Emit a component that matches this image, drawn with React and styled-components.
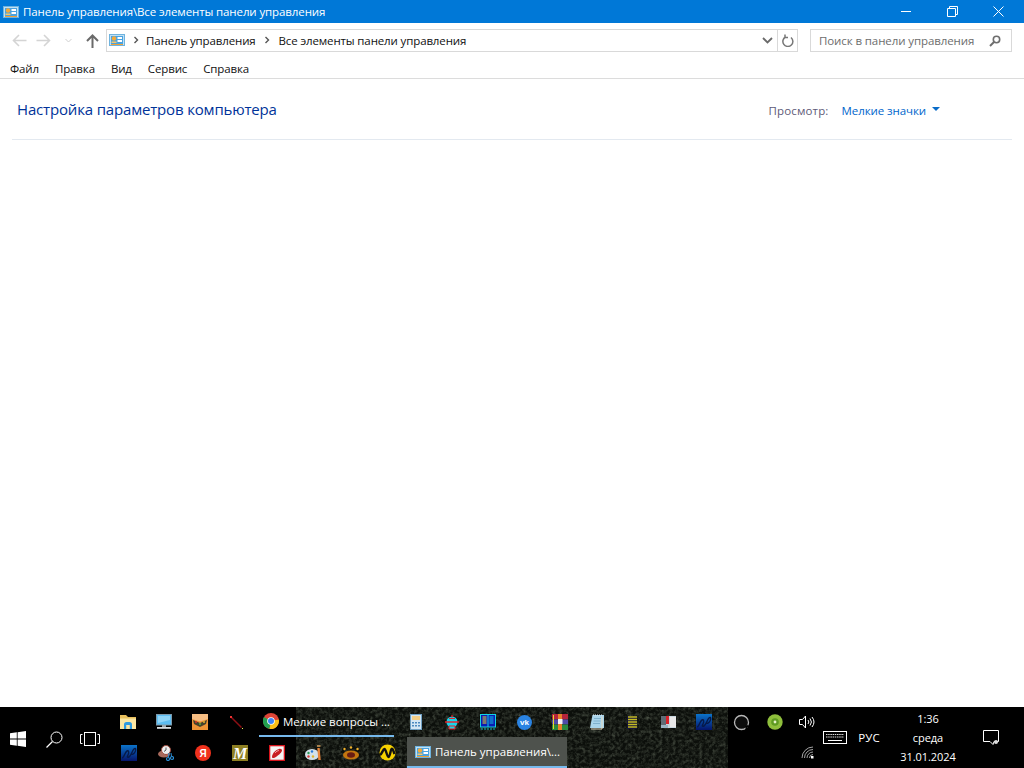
import React from "react";
import styled, { createGlobalStyle } from "styled-components";

const Global = createGlobalStyle`
  html, body { margin: 0; padding: 0; background: #fff; }
  * { box-sizing: border-box; }
  body { font-family: "Open Sans", "Noto Sans", "Liberation Sans", sans-serif; }
`;
const Page = styled.div`
  width: 1024px; height: 768px; display: flex; flex-direction: column; overflow: hidden; background: #fff;
`;
const TitleBar = styled.div`
  height: 23px; background: #0078d7; display: flex; align-items: center; color: #fff; font-size: 11.5px; padding-left: 3px; flex: none;
`;
const TitleText = styled.span`
  margin-left: 4px; flex: 1; letter-spacing: -0.11px; white-space: nowrap;
`;
const WinButton = styled.div`
  width: 46px; height: 23px; display: flex; align-items: center; justify-content: center;
`;
const WinButtons = styled.div`
  display: flex; margin-right: 3px;
`;
const NavRow = styled.div`
  height: 34px; padding: 6px 12px 5px 10px; display: flex; align-items: stretch; flex: none;
`;
const NavButtons = styled.div`
  width: 96px; display: flex; align-items: center; flex: none;
`;
const NavSlot = styled.div`
  width: ${p => p.$w}px; display: flex; justify-content: center; align-items: center;
`;
const AddressBox = styled.div`
  width: 692px; border: 1px solid #d9d9d9; display: flex; align-items: center; font-size: 11.5px; color: #111; flex: none;
`;
const Crumbs = styled.div`
  flex: 1; display: flex; align-items: center; padding: 0 0 1px 2px;
`;
const Crumb = styled.span`
  white-space: nowrap; letter-spacing: -0.13px;
`;
const CrumbSep = styled.span`
  display: flex; width: ${p => p.$w}px; justify-content: center;
`;
const AddrTail = styled.div`
  width: 20px; display: flex; justify-content: center;
`;
const Refresh = styled.div`
  width: 20px; height: 100%; border-left: 1px solid #d9d9d9; display: flex; align-items: center; justify-content: center;
`;
const SearchBox = styled.div`
  width: 202px; margin-left: 12px; border: 1px solid #d9d9d9; display: flex; align-items: center; justify-content: space-between;
  padding: 0 10px 0 8px; font-size: 11.5px; color: #6d6d6d; letter-spacing: -0.1px; white-space: nowrap; flex: none;
`;
const MenuBar = styled.div`
  height: 22px; border-bottom: 1px solid #dcdcdc; display: flex; padding: 3px 0 0 10px; gap: 16px; font-size: 11.5px; color: #111; flex: none;
`;
const MenuItem = styled.span`
  line-height: 18px; letter-spacing: -0.13px;
`;
const Content = styled.main`
  flex: 1; padding: 0 12px;
`;
const Header = styled.div`
  height: 61px; border-bottom: 1px solid #e3e9f0; display: flex; align-items: center; justify-content: space-between; padding: 0 72px 0 5px;
`;
const Heading = styled.h1`
  margin: 0 0 1px; font-size: 15px; font-weight: 400; color: #003399; letter-spacing: -0.17px;
`;
const ViewBy = styled.div`
  display: flex; align-items: center; font-size: 11.5px; padding-top: 2px;
`;
const ViewLabel = styled.span`
  color: #5e5a78; margin-right: 13px; letter-spacing: 0.14px;
`;
const ViewLink = styled.span`
  color: #0066cc; letter-spacing: -0.08px;
`;
const Caret = styled.span`
  width: 0; height: 0; margin: 0 0 2px 6px; border: 4px solid transparent; border-top: 4px solid #0a6cc8; border-bottom: 0;
`;
const Taskbar = styled.footer`
  height: 61px; flex: none; background: #000; position: relative; display: flex; color: #fff; font-size: 11.5px; overflow: hidden;
`;
const Wallpaper = styled.svg`
  position: absolute; left: 296px; top: 0; width: 432px; height: 61px;
`;
const StartArea = styled.div`
  width: 110px; display: flex; align-items: center; flex: none; position: relative; padding-top: 3px;
`;
const SysSlot = styled.div`
  width: 36px; display: flex; justify-content: center; flex: none;
`;
const Rows = styled.div`
  width: 618px; flex: none; display: flex; flex-direction: column; position: relative;
`;
const TaskRow = styled.div`
  height: ${p => p.$h}px; display: flex; align-items: center;
`;
const Quick = styled.div`
  width: ${p => p.$w}px; height: 100%; display: flex; align-items: center; justify-content: center; flex: none;
`;
const TaskBtn = styled.div`
  width: ${p => p.$w}px; height: 100%; margin: ${p => p.$m}; display: flex; align-items: center; gap: 4px; padding-left: ${p => p.$pad}px;
  border-bottom: 2px solid #76b9ed; background: ${p => (p.$active ? "#4e524d" : "transparent")};
  flex: none; white-space: nowrap; letter-spacing: 0;
`;
const Tray = styled.div`
  flex: 1; position: relative; display: flex;
`;
const TrayGrid = styled.div`
  width: 90px; display: grid; grid-template-columns: 26px 42px 22px; grid-template-rows: 30px 31px; justify-items: center; align-items: center; flex: none;
`;
const Keyb = styled.div`
  width: 34px; display: flex; justify-content: center; align-items: center; flex: none;
`;
const Lang = styled.div`
  width: 34px; display: flex; justify-content: center; align-items: center; flex: none;
`;
const Clock = styled.div`
  width: 84px; display: flex; flex-direction: column; align-items: center; justify-content: space-between; padding: 2px 0 2px; line-height: 19px; flex: none;
  font-size: 11px; letter-spacing: -0.05px;
`;
const Notify = styled.div`
  width: 42px; display: flex; justify-content: center; align-items: center; flex: none;
`;

const CplIcon = ({ s = 16 }) => (
  <svg width={s} height={s} viewBox="0 0 16 16">
    <rect x="0.5" y="2.5" width="15" height="11" fill="#bfe0f5" stroke="#6fb3de" />
    <rect x="2" y="4" width="12" height="8" fill="#4aa3e0" />
    <circle cx="5" cy="6.5" r="2.2" fill="#f3a93a" />
    <path d="M2.5 9.5h5V11h-5z" fill="#f7c66a" />
    <path d="M8.5 5H13v2H8.5zM8.5 8H13v2H8.5z" fill="#fff" />
    <path d="M2 12h12v1H2z" fill="#f0a035" />
  </svg>
);
const Sep = () => (
  <svg width="6" height="8" viewBox="0 0 6 8"><path d="M1.5 1l3 3-3 3" fill="none" stroke="#555" strokeWidth="1.4" /></svg>
);
const Arrow = ({ color, flip }) => (
  <svg width="15" height="13" viewBox="0 0 15 13" style={flip ? { transform: "scaleX(-1)" } : undefined}>
    <path d="M7 1L1.5 6.5 7 12M2 6.5h12.5" fill="none" stroke={color} strokeWidth="1.6" />
  </svg>
);
const Folder = () => (
  <svg width="18" height="16" viewBox="0 0 18 16">
    <path d="M1 1h6l2 2h8v12H1z" fill="#e8bf5c" /><path d="M1 4.500h16V15H1z" fill="#fbe6a2" />
    <path d="M5 15v-4.500A2.500 2.500 0 0 1 7.500 8h3a2.500 2.500 0 0 1 2.500 2.500V15h-2.200v-4H7.200v4z" fill="#2f9ae0" />
  </svg>
);
const Monitor = () => (
  <svg width="16" height="16" viewBox="0 0 16 16">
    <rect x="0.5" y="0.5" width="15" height="10.5" fill="#5cbdf2" stroke="#7d99aa" /><path d="M2 2h12v4L2 9z" fill="#8fd4f7" />
    <rect x="6" y="11" width="4" height="2" fill="#9aa6ad" />
    <rect x="1" y="13" width="14" height="1.8" fill="#d8dee2" />
  </svg>
);
const Orange = () => (
  <svg width="16" height="16" viewBox="0 0 16 16">
    <rect width="16" height="16" fill="#ee9436" /><path d="M0 0h16v5L8 7.500 0 5z" fill="#f6bd82" />
    <path d="M1 6l7 3 7-3-1 4-6 3-6-3z" fill="#46422c" /><circle cx="4" cy="8" r="1" fill="#d8342c" /><circle cx="8" cy="10" r="1" fill="#5fae3a" /><circle cx="12" cy="8" r="1" fill="#e8b52e" />
  </svg>
);
const Wand = () => (
  <svg width="13" height="13" viewBox="0 0 13 13"><path d="M1.5 1.5l10 10" stroke="#8c0f14" strokeWidth="1.5" /><rect x="0" y="0" width="2" height="2" fill="#e33" /><rect x="12" y="12" width="1" height="1" fill="#ee5" /></svg>
);
const Chart = ({ id = "a" }) => (
  <svg width="16" height="16" viewBox="0 0 16 16">
    <defs><linearGradient id={`cg${id}`} x1="0" y1="0" x2="0" y2="1"><stop offset="0" stopColor="#0b73c9" /><stop offset="1" stopColor="#05146a" /></linearGradient></defs>
    <rect width="16" height="16" fill={`url(#cg${id})`} />
    <path d="M1 13c2 0 3-6 5-7s2 2 1 4-1 3 1 2 3-6 5-8 2 1 1 3-3 3-4 2" fill="none" stroke="#061a4a" strokeWidth="1.4" />
  </svg>
);
const Chart2 = () => <Chart id="b" />;
const Clockish = () => (
  <svg width="16" height="16" viewBox="0 0 16 16">
    <ellipse cx="6" cy="9" rx="6" ry="3.5" fill="#a96a5c" /><circle cx="8" cy="5" r="4.5" fill="#eee" stroke="#9c4a3c" />
    <path d="M8 2.500V5L6 6.500" stroke="#555" fill="none" /><circle cx="10" cy="14" r="1.5" fill="none" stroke="#2a8fd8" strokeWidth="1.2" /><circle cx="14" cy="13" r="1.5" fill="none" stroke="#2a8fd8" strokeWidth="1.2" /><path d="M11 8l-.5 4.500M13 8l.5 3.500" stroke="#2a8fd8" />
  </svg>
);
const YaText = styled.text`
  font-family: "Liberation Sans", sans-serif; font-size: 10px; font-weight: 700; fill: #fff; text-anchor: middle;
`;
const MText = styled.text`
  font-family: "Liberation Serif", serif; font-size: 16px; font-weight: 700; font-style: italic; fill: #fff; text-anchor: middle;
`;
const Ya = () => (
  <svg width="16" height="16" viewBox="0 0 16 16"><circle cx="8" cy="8" r="8" fill="#f0311c" /><YaText x="8" y="12">Я</YaText></svg>
);
const MIcon = () => (
  <svg width="16" height="16" viewBox="0 0 16 16"><rect width="16" height="16" fill="#8d7f22" /><MText x="8" y="14">M</MText></svg>
);
const Chrome = () => (
  <svg width="16" height="16" viewBox="0 0 16 16">
    <circle cx="8" cy="8" r="8" fill="#de4437" /><path d="M8 8L1 4A8 8 0 0 0 6.500 15.900z" fill="#22a04f" /><path d="M8 8l7.800-1.500A8 8 0 0 1 6.500 15.900z" fill="#fbc116" />
    <circle cx="8" cy="8" r="3.800" fill="#fff" /><circle cx="8" cy="8" r="3" fill="#3f85f4" />
  </svg>
);
const RedBox = () => (
  <svg width="16" height="16" viewBox="0 0 16 16"><rect x="0.5" y="0.5" width="15" height="15" fill="#f4f4f4" stroke="#d8141c" strokeWidth="1.6" /><path d="M3 12c0-3 3-7 7-8 2-.5 3 .5 3 1.500 0 2-5 6-7 7s-3 .5-3-.5z" fill="#c81e22" /><path d="M6 8c1-1.500 3-2.500 4-2.500" stroke="#f3a0a0" fill="none" /></svg>
);
const Palette = () => (
  <svg width="18" height="16" viewBox="0 0 18 16"><ellipse cx="7" cy="9.500" rx="7" ry="5.500" fill="#d4e2ea" /><circle cx="3.500" cy="8" r="1.200" fill="#2a9a5a" /><circle cx="7" cy="6.500" r="1.200" fill="#2a7ad8" /><circle cx="3.500" cy="11.500" r="1.200" fill="#d63a3a" /><circle cx="8" cy="11.500" r="1.200" fill="#e2b52a" /><path d="M13.500 3l1 12" stroke="#e8853a" strokeWidth="2.400" /><path d="M12 1h3.500" stroke="#a8804a" strokeWidth="2" /></svg>
);
const Crown = () => (
  <svg width="18" height="14" viewBox="0 0 18 14"><ellipse cx="9" cy="9" rx="8" ry="4.500" fill="#c4760f" /><ellipse cx="9" cy="9" rx="4" ry="2.800" fill="#6a1c12" /><circle cx="2.500" cy="3" r="1.200" fill="#f1b32c" /><circle cx="9" cy="1.500" r="1.200" fill="#f1b32c" /><circle cx="15.500" cy="3" r="1.200" fill="#f1b32c" /></svg>
);
const Beeline = () => (
  <svg width="17" height="17" viewBox="0 0 17 17"><circle cx="8.500" cy="8.500" r="8" fill="#f6d100" /><path d="M1 11c2-1 3-6 4.500-6s2.500 8 4 8 2-7 3-8 2 2 3 5" fill="none" stroke="#111" strokeWidth="2.400" /></svg>
);
const Calc = () => (
  <svg width="12" height="16" viewBox="0 0 12 16"><rect x=".5" y=".5" width="11" height="15" fill="#d3e6f4" stroke="#6fa0c4" /><rect x="2" y="2" width="8" height="4" fill="#f3cf88" /><path d="M2 8h2v1.500H2zM5 8h2v1.500H5zM8 8h2v1.500H8zM2 11h2v1.500H2zM5 11h2v1.500H5zM8 11h2v1.500H8z" fill="#4c8ac0" /></svg>
);
const Ufo = () => (
  <svg width="14" height="15" viewBox="0 0 14 15"><circle cx="7" cy="7" r="5.500" fill="#17d4ea" /><rect x="0" y="6.300" width="14" height="1.400" fill="#f01c24" /><path d="M7 0v2.500M4 3.500h6" stroke="#f01c24" strokeWidth="1.200" /><path d="M4 11h6v3H4z" fill="#17d4ea" stroke="#f01c24" /></svg>
);
const Book = () => (
  <svg width="16" height="16" viewBox="0 0 16 16"><rect x=".5" y=".5" width="15" height="12.500" fill="#0a1bb4" stroke="#13d4e4" /><path d="M8 1v12" stroke="#13d4e4" /><path d="M2.500 3h4M2.500 5h4M2.500 7h4M2.500 9h4" stroke="#f0d82a" /><path d="M9.500 3h4M9.500 5h4M9.500 7h4M9.500 9h4" stroke="#17c8e4" /><path d="M1 15h14" stroke="#0fb0c0" strokeDasharray="2 1" /></svg>
);
const VkText = styled.text`
  font-family: "Liberation Sans", sans-serif; font-size: 8px; font-weight: 700; fill: #fff; text-anchor: middle;
`;
const Vk = () => (
  <svg width="15" height="15" viewBox="0 0 15 15"><circle cx="7.500" cy="7.500" r="7.500" fill="#2a83e2" /><VkText x="7.500" y="10.300">vk</VkText></svg>
);
const Rar = () => (
  <svg width="16" height="16" viewBox="0 0 16 16"><rect width="16" height="5.500" fill="#b5243c" /><rect y="5.500" width="16" height="5" fill="#4f4aa8" /><rect y="10.500" width="16" height="5.500" fill="#2a8a3e" /><rect x="6" width="4" height="16" fill="#e8812a" /><rect x="6" y="5" width="4.500" height="5" fill="#f3f3f3" /><rect x="1" y="1" width="1" height="14" fill="#e8d82a" /></svg>
);
const Note = () => (
  <svg width="15" height="16" viewBox="0 0 15 16"><path d="M3.500 1H15v13H1z" fill="#a9d4ea" /><path d="M13 2.500V15H2" fill="none" stroke="#e8dcc0" strokeWidth="1" /><path d="M5 4.500h7M4.500 7h7M4 9.500h7" stroke="#7eb0cc" /><path d="M4 1h10" stroke="#e8f2f8" strokeDasharray="1 1" /></svg>
);
const Spring = () => (
  <svg width="11" height="15" viewBox="0 0 11 15"><rect x="0" y="1" width="10" height="13" fill="#14143a" /><path d="M1 2h9M1 4.500h9M1 7h9M1 9.500h9M1 12h9" stroke="#c4bb22" strokeWidth="1.400" /></svg>
);
const Alert = () => (
  <svg width="15" height="14" viewBox="0 0 15 14"><rect width="15" height="12" y="1" fill="#c8d6de" /><rect x="0" y="1" width="5" height="12" fill="#5f6c76" /><rect x="5" y="1" width="3" height="8" fill="#d8222a" /><rect x="9" y="2" width="6" height="10" fill="#e8e8e8" /><rect x="0" y="10" width="7" height="3" fill="#9ab4c4" /></svg>
);
const Ring = () => (
  <svg width="17" height="17" viewBox="0 0 17 17"><circle cx="8.500" cy="8.500" r="7" fill="#0c0c0c" stroke="#b8b8b8" strokeWidth="1.300" /><path d="M15.500 11.500l-2.500 1.500.5 2.500" stroke="#000" strokeWidth="1.500" fill="none" /></svg>
);
const Disc = () => (
  <svg width="16" height="16" viewBox="0 0 16 16"><circle cx="8" cy="8" r="7.700" fill="#8fbf3c" /><circle cx="8" cy="8" r="3.800" fill="#5f9a22" /><circle cx="8" cy="8" r="1.400" fill="#e6f3c8" /></svg>
);

const row1a = [Folder, Monitor, Orange, Wand];
const row1b = [Calc, Ufo, Book, Vk, Rar, Note, Spring, Alert, Chart];
const row2 = [Chart2, Clockish, Ya, MIcon, RedBox, Palette, Crown, Beeline];

export default function App() {
  return (
    <Page>
      <Global />
      <TitleBar>
        <CplIcon />
        <TitleText>Панель управления\Все элементы панели управления</TitleText>
        <WinButtons>
          <WinButton><svg width="11" height="11" viewBox="0 0 11 11"><path d="M0 5.500h10" stroke="#fff" /></svg></WinButton>
          <WinButton><svg width="11" height="11" viewBox="0 0 11 11"><path d="M0.500 2.500h8v8h-8zM2.500 2.500v-2h8v8h-2" fill="none" stroke="#fff" /></svg></WinButton>
          <WinButton><svg width="11" height="11" viewBox="0 0 11 11"><path d="M.5.500l10 10M10.500.500l-10 10" stroke="#fff" /></svg></WinButton>
        </WinButtons>
      </TitleBar>
      <NavRow>
        <NavButtons>
          <NavSlot $w={19}><Arrow color="#d4d4d4" /></NavSlot>
          <NavSlot $w={29}><Arrow color="#d4d4d4" flip /></NavSlot>
          <NavSlot $w={20}><svg width="7" height="5" viewBox="0 0 7 5"><path d="M.5 1l3 3 3-3" fill="none" stroke="#cfcfcf" /></svg></NavSlot>
          <NavSlot $w={28}>
            <svg width="13" height="14" viewBox="0 0 13 14"><path d="M1 7l5.500-5.500L12 7M6.500 2v12" fill="none" stroke="#6a6a6a" strokeWidth="2" /></svg>
          </NavSlot>
        </NavButtons>
        <AddressBox>
          <Crumbs>
            <CplIcon />
            <CrumbSep $w={21}><Sep /></CrumbSep>
            <Crumb>Панель управления</Crumb>
            <CrumbSep $w={23}><Sep /></CrumbSep>
            <Crumb>Все элементы панели управления</Crumb>
          </Crumbs>
          <AddrTail><svg width="11" height="7" viewBox="0 0 11 7"><path d="M1 1l4.500 4.500L10 1" fill="none" stroke="#6a6a6a" strokeWidth="1.800" /></svg></AddrTail>
          <Refresh><svg width="12" height="13" viewBox="0 0 12 13"><path d="M3.500 3A5 5 0 1 0 9 3.500M3 .5v3h3" fill="none" stroke="#777" strokeWidth="1.500" /></svg></Refresh>
        </AddressBox>
        <SearchBox>
          Поиск в панели управления
          <svg width="12" height="12" viewBox="0 0 12 12"><circle cx="7.500" cy="4.500" r="3.200" fill="none" stroke="#6e6e6e" strokeWidth="1.600" /><path d="M5 7l-4 4" stroke="#6e6e6e" strokeWidth="2" /></svg>
        </SearchBox>
      </NavRow>
      <MenuBar>
        <MenuItem>Файл</MenuItem>
        <MenuItem>Правка</MenuItem>
        <MenuItem>Вид</MenuItem>
        <MenuItem>Сервис</MenuItem>
        <MenuItem>Справка</MenuItem>
      </MenuBar>
      <Content>
        <Header>
          <Heading>Настройка параметров компьютера</Heading>
          <ViewBy>
            <ViewLabel>Просмотр:</ViewLabel>
            <ViewLink>Мелкие значки</ViewLink>
            <Caret />
          </ViewBy>
        </Header>
      </Content>
      <Taskbar>
        <Wallpaper viewBox="0 0 432 61" preserveAspectRatio="none">
          <filter id="grain" x="0" y="0" width="100%" height="100%">
            <feTurbulence type="fractalNoise" baseFrequency="0.3" numOctaves="4" seed="11" />
            <feColorMatrix values="0 0 0 0 0.15  0 0 0 0 0.18  0 0 0 0 0.13  0.7 0.7 0 0 -0.58" />
          </filter>
          <rect width="432" height="61" fill="#0c0f0b" />
          <rect width="432" height="61" filter="url(#grain)" />
        </Wallpaper>
        <StartArea>
          <SysSlot>
            <svg width="16" height="16" viewBox="0 0 16 16"><path d="M0 2.300l6.800-1v6.200H0zM7.600 1.200L16 0v7.500H7.600zM0 8.400h6.800v6.300L0 13.700zM7.600 8.400H16V16l-8.400-1.200z" fill="#fff" /></svg>
          </SysSlot>
          <SysSlot>
            <svg width="17" height="17" viewBox="0 0 17 17"><circle cx="10.500" cy="6.500" r="5.500" fill="none" stroke="#fff" /><path d="M6.500 10.500L.5 16.500" stroke="#fff" strokeWidth="1.200" /></svg>
          </SysSlot>
          <SysSlot>
            <svg width="20" height="14" viewBox="0 0 20 14"><rect x="4.500" y=".5" width="11" height="13" fill="none" stroke="#fff" /><path d="M2.500 2.500h-2v9h2M17.500 2.500h2v9h-2" fill="none" stroke="#fff" /></svg>
          </SysSlot>
        </StartArea>
        <Rows>
          <TaskRow $h={30}>
            {row1a.map((I, i) => <Quick key={i} $w={36}><I /></Quick>)}
            <TaskBtn $w={135} $m="0 4px 0 5px" $pad={4}><Chrome />Мелкие вопросы ...</TaskBtn>
            {row1b.map((I, i) => <Quick key={i} $w={36}><I /></Quick>)}
          </TaskRow>
          <TaskRow $h={31}>
            {row2.map((I, i) => <Quick key={i} $w={37}><I /></Quick>)}
            <TaskBtn $active $w={160} $m="0 0 0 1px" $pad={8}><CplIcon />Панель управления\...</TaskBtn>
          </TaskRow>
        </Rows>
        <Tray>
          <TrayGrid>
            <Ring />
            <Disc />
            <svg width="16" height="14" viewBox="0 0 16 14"><path d="M.5 4.500h3l3-3.500v12l-3-3.500h-3z" fill="none" stroke="#fff" /><path d="M9 5a3 3 0 0 1 0 4M11 3.500a5.500 5.500 0 0 1 0 7M13 2a8 8 0 0 1 0 10" fill="none" stroke="#fff" /></svg>
            <span />
            <span />
            <svg width="13" height="13" viewBox="0 0 13 13"><path d="M1 12A11 11 0 0 1 12 1M3.500 12A8.500 8.500 0 0 1 12 3.500M6 12a6 6 0 0 1 6-6M8.500 12A3.500 3.500 0 0 1 12 8.500" fill="none" stroke="#ccc" strokeWidth=".8" /><rect x="10" y="10" width="2.500" height="2.500" fill="#fff" /></svg>
          </TrayGrid>
          <Keyb>
            <svg width="24" height="13" viewBox="0 0 24 13"><rect x=".5" y=".5" width="23" height="12" fill="none" stroke="#fff" /><path d="M3 3.500h18M3 6h18" stroke="#ddd" strokeDasharray="1.500 .7" /><path d="M5 9.500h14" stroke="#fff" /></svg>
          </Keyb>
          <Lang>РУС</Lang>
          <Clock>
            <span>1:36</span>
            <span>среда</span>
            <span>31.01.2024</span>
          </Clock>
          <Notify>
            <svg width="16" height="15" viewBox="0 0 16 15"><path d="M.5.500h15v11H11l-1 3-3-3H.5z" fill="none" stroke="#fff" /><circle cx="13" cy="12" r="2" fill="#ddd" /></svg>
          </Notify>
        </Tray>
      </Taskbar>
    </Page>
  );
}
